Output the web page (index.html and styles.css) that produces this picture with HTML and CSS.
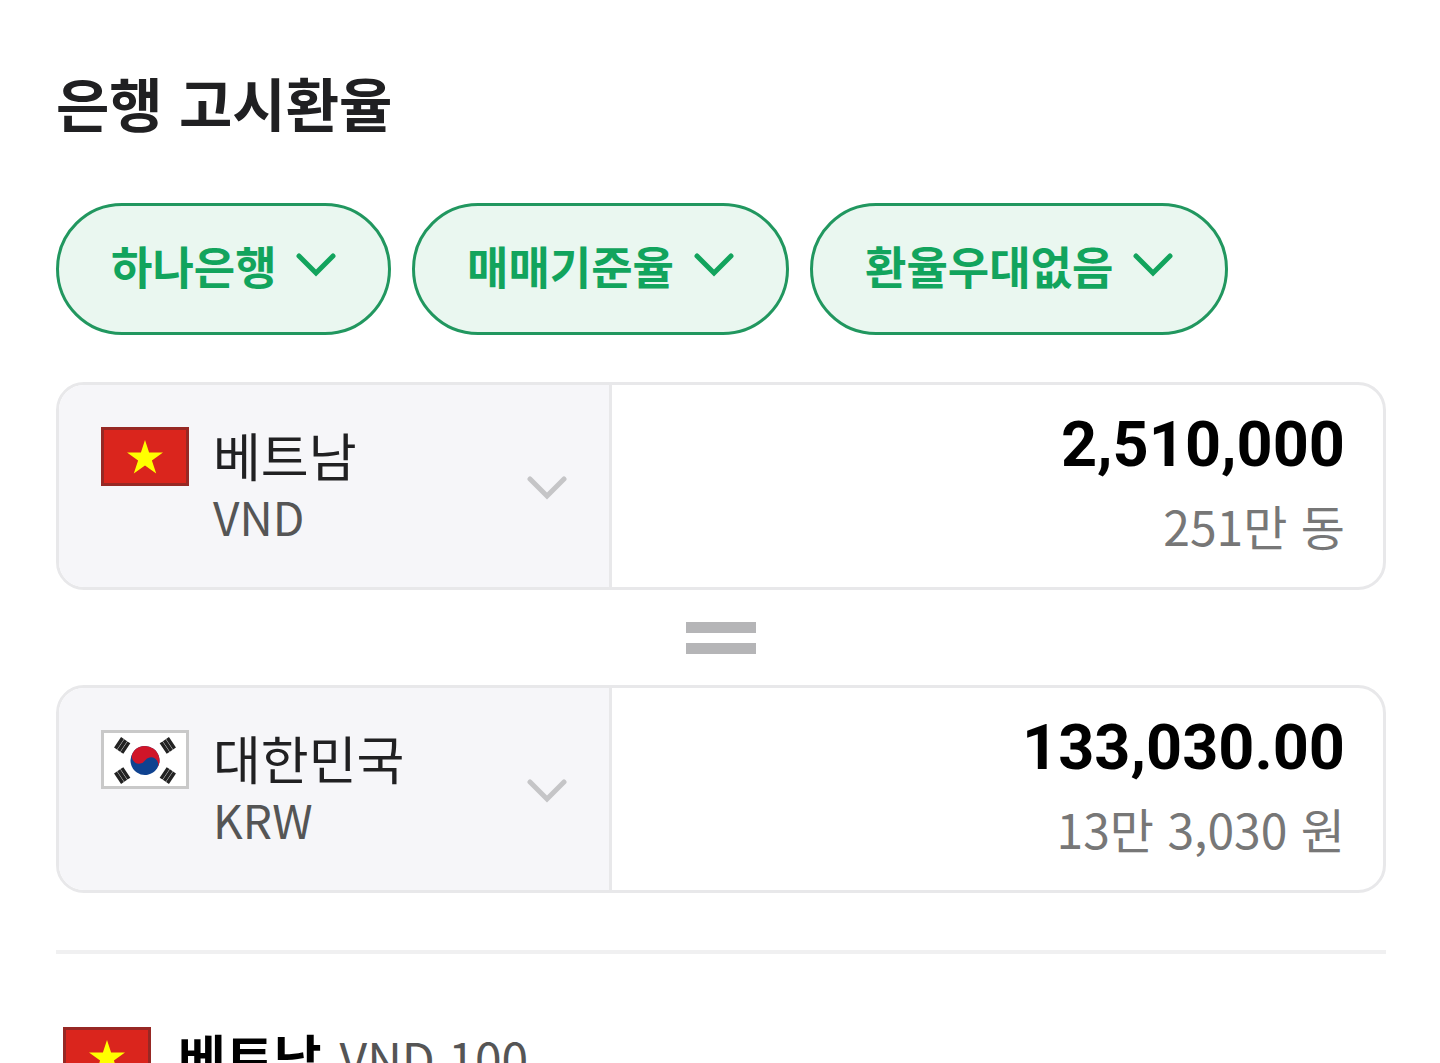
FILE: index.html
```html
<!DOCTYPE html>
<html lang="ko">
<head>
  <meta charset="UTF-8">
  <meta name="viewport" content="width=device-width, initial-scale=1">
  <title>은행 고시환율</title>
  <link rel="stylesheet" href="styles.css">
</head>
<body>

  <!-- shared flags and arrow -->
  <svg class="symbols" aria-hidden="true">
    <symbol id="flag-vn" viewBox="0 0 88 59">
      <rect width="88" height="59" fill="#da251d"/>
      <path fill="#ff0" d="M44 13l4.100 12.600h13.900l-11.100 8 4.300 13-11.200-8-11.200 8 4.300-13-11.100-8h13.900z"/>
      <rect x="1.500" y="1.500" width="85" height="56" fill="none" stroke="#972824" stroke-width="3"/>
    </symbol>
    <symbol id="flag-kr" viewBox="0 0 88 59">
      <rect width="88" height="59" fill="#fff"/>
      <g transform="rotate(34 44 30.500)">
        <circle cx="44" cy="30.500" r="14.500" fill="#0f4290"/>
        <path fill="#d01529" d="M29.500 30.500a14.500 14.500 0 0 1 29 0a7.250 7.250 0 0 0-14.500 0a7.250 7.250 0 0 1-14.500 0z"/>
      </g>
      <g stroke="#222" stroke-width="3.500">
        <path d="M14.500 18.500l7-10.500M17.700 20.700l7-10.500M20.900 22.900l7-10.500"/>
        <path d="M73.500 18.500l-7-10.500M70.300 20.700l-7-10.500M67.100 22.900l-7-10.500"/>
        <path d="M14.500 42.500l7 10.500M17.700 40.300l7 10.500M20.900 38.100l7 10.500"/>
        <path d="M73.500 42.500l-7 10.500M70.300 40.300l-7 10.500M67.100 38.100l-7 10.500"/>
      </g>
      <rect x="1.500" y="1.500" width="85" height="56" fill="none" stroke="#c9c9c9" stroke-width="3"/>
    </symbol>
    <symbol id="arrow" viewBox="0 0 40 24">
      <path d="M3 3l17 17L37 3" fill="none" stroke="currentColor" stroke-width="5" stroke-linecap="round"/>
    </symbol>
  </svg>

  <main class="exchange">
    <h1>은행 고시환율</h1>

    <div class="filters">
      <div class="filter">
        <select aria-label="은행">
          <option>하나은행</option>
        </select>
        <svg class="arrow"><use href="#arrow"/></svg>
      </div>
      <div class="filter">
        <select aria-label="환율 기준">
          <option>매매기준율</option>
        </select>
        <svg class="arrow"><use href="#arrow"/></svg>
      </div>
      <div class="filter">
        <select aria-label="환율 우대">
          <option>환율우대없음</option>
        </select>
        <svg class="arrow"><use href="#arrow"/></svg>
      </div>
    </div>

    <div class="currency-box">
      <div class="country">
        <svg class="flag"><use href="#flag-vn"/></svg>
        <div class="country-name">
          <select aria-label="기준 통화">
            <option>베트남</option>
          </select>
          <span class="code">VND</span>
        </div>
        <svg class="arrow"><use href="#arrow"/></svg>
      </div>
      <div class="amount">
        <input type="text" inputmode="decimal" aria-label="베트남 동 금액" value="2,510,000">
        <span class="reading">251만 동</span>
      </div>
    </div>

    <div class="equal"></div>

    <div class="currency-box">
      <div class="country">
        <svg class="flag"><use href="#flag-kr"/></svg>
        <div class="country-name">
          <select aria-label="환산 통화">
            <option>대한민국</option>
          </select>
          <span class="code">KRW</span>
        </div>
        <svg class="arrow"><use href="#arrow"/></svg>
      </div>
      <div class="amount">
        <input type="text" inputmode="decimal" aria-label="대한민국 원 금액" value="133,030.00">
        <span class="reading">13만 3,030 원</span>
      </div>
    </div>

    <section class="rate">
      <svg class="flag"><use href="#flag-vn"/></svg>
      <h2>베트남</h2>
      <span class="unit">VND 100</span>
    </section>
  </main>

</body>
</html>
```
FILE: styles.css
```css
* {
  box-sizing: border-box;
}

body {
  margin: 0;
  background: #fff;
  color: #202022;
  font-family: "Noto Sans CJK KR", sans-serif;
}

.symbols {
  display: none;
}

.exchange {
  padding: 64px 54px 0 56px;
}

h1 {
  margin: 0;
  font-size: 58px;
  line-height: 76px;
  font-weight: 700;
}

select,
input {
  margin: 0;
  padding: 0;
  border: 0;
  outline: 0;
  background: transparent;
  color: inherit;
  font-family: inherit;
  appearance: none;
}

.arrow {
  flex: none;
  width: 40px;
  height: 24px;
}

.filters {
  display: flex;
  flex-wrap: wrap;
  gap: 21px;
  margin-top: 63px;
}

.filter {
  position: relative;
  color: #12a45d;
}

.filter select {
  height: 132px;
  padding: 0 111px 8px 52px;
  border: 3px solid #21975f;
  border-radius: 66px;
  background: #eaf7f0;
  font-size: 45px;
  font-weight: 700;
}

/* sits on top of the select */
.filter .arrow {
  position: absolute;
  top: 50px;
  right: 55px;
  pointer-events: none;
}

.currency-box {
  display: flex;
  margin-top: 47px;
  border: 3px solid #e8e8ea;
  border-radius: 28px;
  overflow: hidden;
}

.country {
  display: flex;
  align-items: flex-start;
  gap: 24px;
  width: 41.8%;
  padding: 42px 42px 38px;
  border-right: 3px solid #e8e8ea;
  background: #f6f6f9;
}

.flag {
  flex: none;
  width: 88px;
  height: 59px;
}

.country-name {
  flex: 1;
  min-width: 0;
}

.country-name select {
  display: block;
  width: 100%;
  height: 56px;
  font-size: 52px;
  line-height: 54px;
}

.code {
  display: block;
  color: #555;
  font-size: 46px;
  line-height: 66px;
}

.country .arrow {
  align-self: center;
  color: #c5c5c7;
}

.amount {
  flex: 1;
  min-width: 0;
  padding: 23px 38px 17px;
  text-align: right;
}

.amount input {
  display: block;
  width: 100%;
  height: 72px;
  color: #000;
  font-family: Roboto, sans-serif;
  font-size: 63px;
  font-weight: 700;
  text-align: right;
}

.reading {
  display: block;
  color: #777;
  font-size: 48px;
  line-height: 90px;
}

.equal {
  width: 70px;
  height: 32px;
  margin: 32px auto 31px;
  border: solid #b5b5b7;
  border-width: 11px 0;
}

.equal + .currency-box {
  margin-top: 0;
}

.rate {
  display: flex;
  align-items: flex-start;
  margin-top: 57px;
  padding: 73px 7px 0;
  border-top: 4px solid #f0f0f1;
}

.rate h2 {
  margin: 0 18px 0 27px;
  color: #000;
  font-size: 52px;
  line-height: 60px;
  font-weight: 700;
}

.unit {
  color: #555;
  font-size: 48px;
  line-height: 60px;
}
```
